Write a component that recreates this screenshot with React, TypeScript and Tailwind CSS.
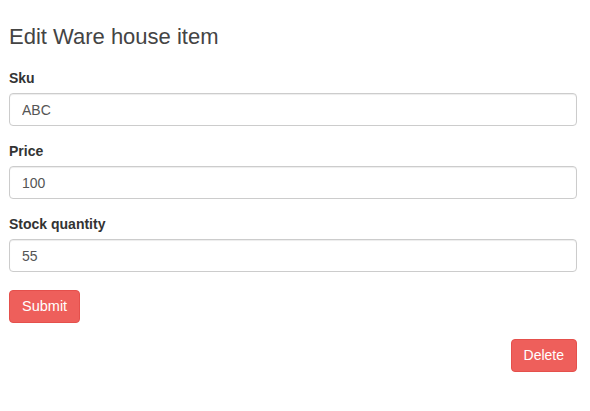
import React from "react";

function Field({ label, value }: { label: string; value: string }) {
  return (
    <div className="mb-[15px]">
      <label className="block mb-[5px] text-[14px] leading-[20px] font-bold text-[#333]">{label}</label>
      <input
        readOnly
        value={value}
        className="block w-full h-[33px] px-3 text-[14px] text-[#555] bg-white border border-[#ccc] rounded-[4px] shadow-[inset_0_1px_1px_rgba(0,0,0,0.075)] outline-none"
        style={{ fontFamily: '"Liberation Sans", Arial, sans-serif' }}
      />
    </div>
  );
}

export default function App() {
  return (
    <div
      className="w-[590px] h-[411px] bg-white pl-[9px] pr-[13px] pt-[25px]"
      style={{ fontFamily: '"Liberation Sans", Arial, sans-serif' }}
    >
      <h3 className="text-[22px] leading-[24px] text-[#444] mb-[19px]">Edit Ware house item</h3>
      <Field label="Sku" value="ABC" />
      <Field label="Price" value="100" />
      <Field label="Stock quantity" value="55" />
      <button className="block h-[33px] px-3 text-[14.5px] text-white bg-[#ee5f5b] border border-[#e5504c] rounded-[4px] mt-[18px]">
        Submit
      </button>
      <div className="flex justify-end mt-[16px]">
        <button className="h-[33px] px-3 text-[14px] text-white bg-[#ee5f5b] border border-[#e5504c] rounded-[4px]">
          Delete
        </button>
      </div>
    </div>
  );
}
